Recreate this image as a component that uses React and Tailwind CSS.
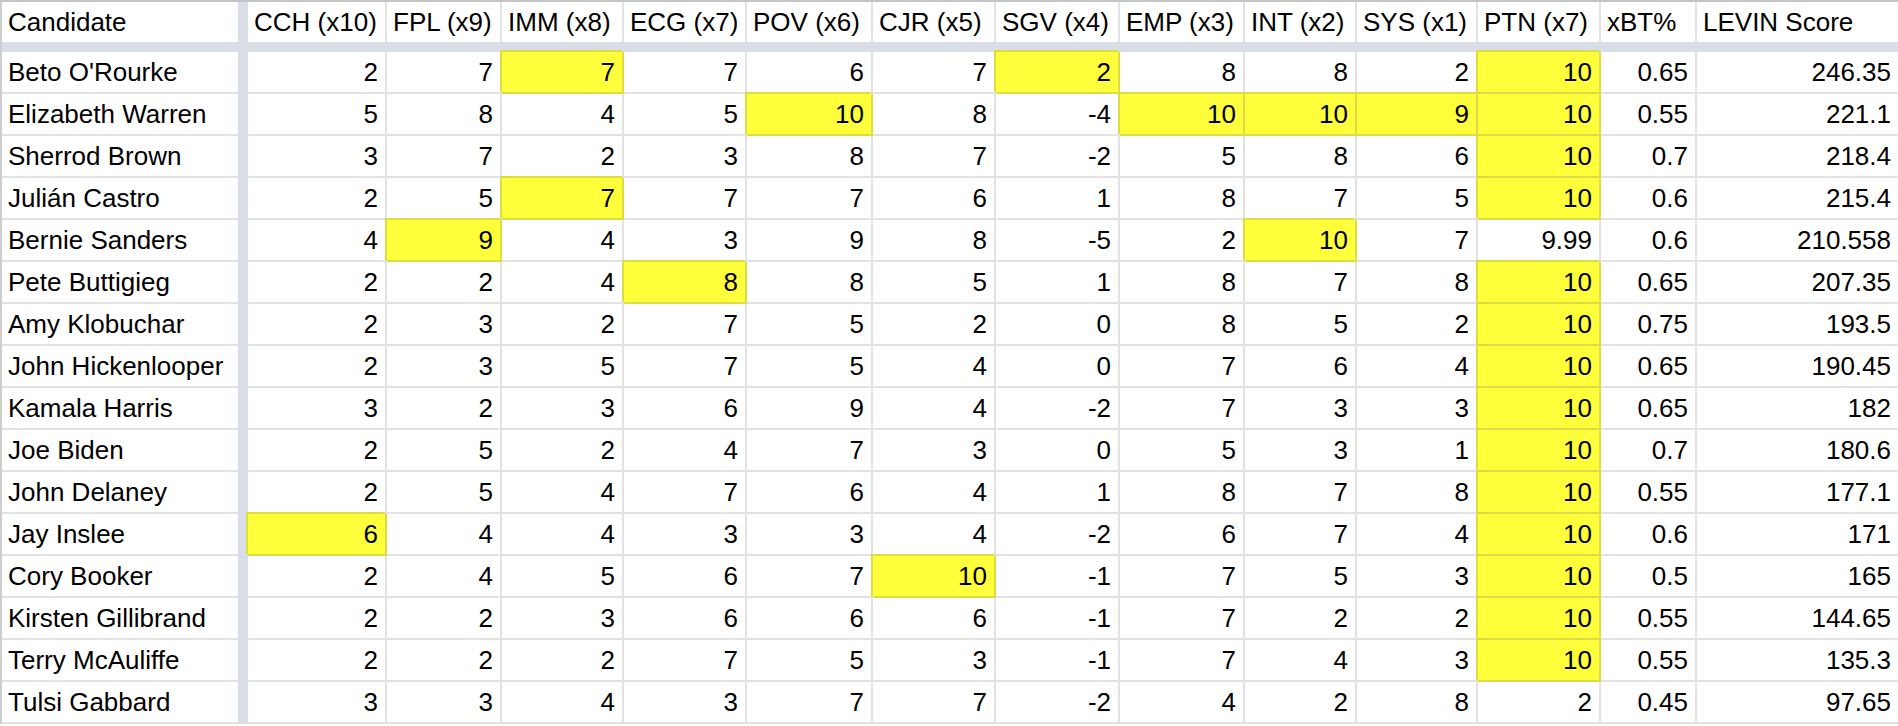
import React from "react";

const headers = [
  "CCH (x10)", "FPL (x9)", "IMM (x8)", "ECG (x7)", "POV (x6)", "CJR (x5)",
  "SGV (x4)", "EMP (x3)", "INT (x2)", "SYS (x1)", "PTN (x7)", "xBT%", "LEVIN Score",
];

// "*" suffix marks a highlighted (yellow) cell
const rows = [
  ["Beto O'Rourke", "2", "7", "7*", "7", "6", "7", "2*", "8", "8", "2", "10*", "0.65", "246.35"],
  ["Elizabeth Warren", "5", "8", "4", "5", "10*", "8", "-4", "10*", "10*", "9*", "10*", "0.55", "221.1"],
  ["Sherrod Brown", "3", "7", "2", "3", "8", "7", "-2", "5", "8", "6", "10*", "0.7", "218.4"],
  ["Julián Castro", "2", "5", "7*", "7", "7", "6", "1", "8", "7", "5", "10*", "0.6", "215.4"],
  ["Bernie Sanders", "4", "9*", "4", "3", "9", "8", "-5", "2", "10*", "7", "9.99", "0.6", "210.558"],
  ["Pete Buttigieg", "2", "2", "4", "8*", "8", "5", "1", "8", "7", "8", "10*", "0.65", "207.35"],
  ["Amy Klobuchar", "2", "3", "2", "7", "5", "2", "0", "8", "5", "2", "10*", "0.75", "193.5"],
  ["John Hickenlooper", "2", "3", "5", "7", "5", "4", "0", "7", "6", "4", "10*", "0.65", "190.45"],
  ["Kamala Harris", "3", "2", "3", "6", "9", "4", "-2", "7", "3", "3", "10*", "0.65", "182"],
  ["Joe Biden", "2", "5", "2", "4", "7", "3", "0", "5", "3", "1", "10*", "0.7", "180.6"],
  ["John Delaney", "2", "5", "4", "7", "6", "4", "1", "8", "7", "8", "10*", "0.55", "177.1"],
  ["Jay Inslee", "6*", "4", "4", "3", "3", "4", "-2", "6", "7", "4", "10*", "0.6", "171"],
  ["Cory Booker", "2", "4", "5", "6", "7", "10*", "-1", "7", "5", "3", "10*", "0.5", "165"],
  ["Kirsten Gillibrand", "2", "2", "3", "6", "6", "6", "-1", "7", "2", "2", "10*", "0.55", "144.65"],
  ["Terry McAuliffe", "2", "2", "2", "7", "5", "3", "-1", "7", "4", "3", "10*", "0.55", "135.3"],
  ["Tulsi Gabbard", "3", "3", "4", "3", "7", "7", "-2", "4", "2", "8", "2", "0.45", "97.65"],
];

function Divider() {
  return <div className="bg-[#d9dde5]" />;
}

export default function App() {
  return (
    <div
      className="w-[1898px] h-[726px] overflow-hidden bg-white text-black text-[26px]"
      style={{ fontFamily: '"Liberation Sans", Arial, sans-serif' }}
    >
      <div className="w-[1900px] border-t-2 border-l-2 border-t-[#c4c4c4] border-l-[#cfcfcf]">
        <div className="grid grid-cols-[236px_10px_139px_115px_122px_123px_126px_123px_124px_125px_112px_121px_123px_96px_203px]">
          {/* header row */}
          <div className="h-[40px] flex items-center pl-[6px] whitespace-nowrap">Candidate</div>
          <Divider />
          {headers.map((h) => (
            <div
              key={h}
              className="h-[40px] flex items-center pl-[6px] whitespace-nowrap overflow-hidden border-r-2 border-[#e2e2e2]"
            >
              {h}
            </div>
          ))}

          {/* frozen row band */}
          <div className="col-span-full h-[10px] bg-[#d9dde5]" />

          {rows.map((r) => (
            <React.Fragment key={r[0]}>
              <div className="h-[42px] flex items-center pl-[6px] whitespace-nowrap border-b-2 border-[#e2e2e2]">
                {r[0]}
              </div>
              <Divider />
              {r.slice(1).map((v, i) => {
                const hl = v.endsWith("*");
                const val = hl ? v.slice(0, -1) : v;
                return (
                  <div
                    key={i}
                    className={
                      hl
                        ? "h-[42px] flex items-center justify-end pr-[7px] whitespace-nowrap border-r-2 border-b-2 border-[#dcdc44] bg-[#ffff3b] shadow-[-2px_-2px_0_0_#dcdc44]"
                        : "h-[42px] flex items-center justify-end pr-[7px] whitespace-nowrap border-r-2 border-b-2 border-[#e2e2e2]"
                    }
                  >
                    {val}
                  </div>
                );
              })}
            </React.Fragment>
          ))}
        </div>
      </div>
    </div>
  );
}
